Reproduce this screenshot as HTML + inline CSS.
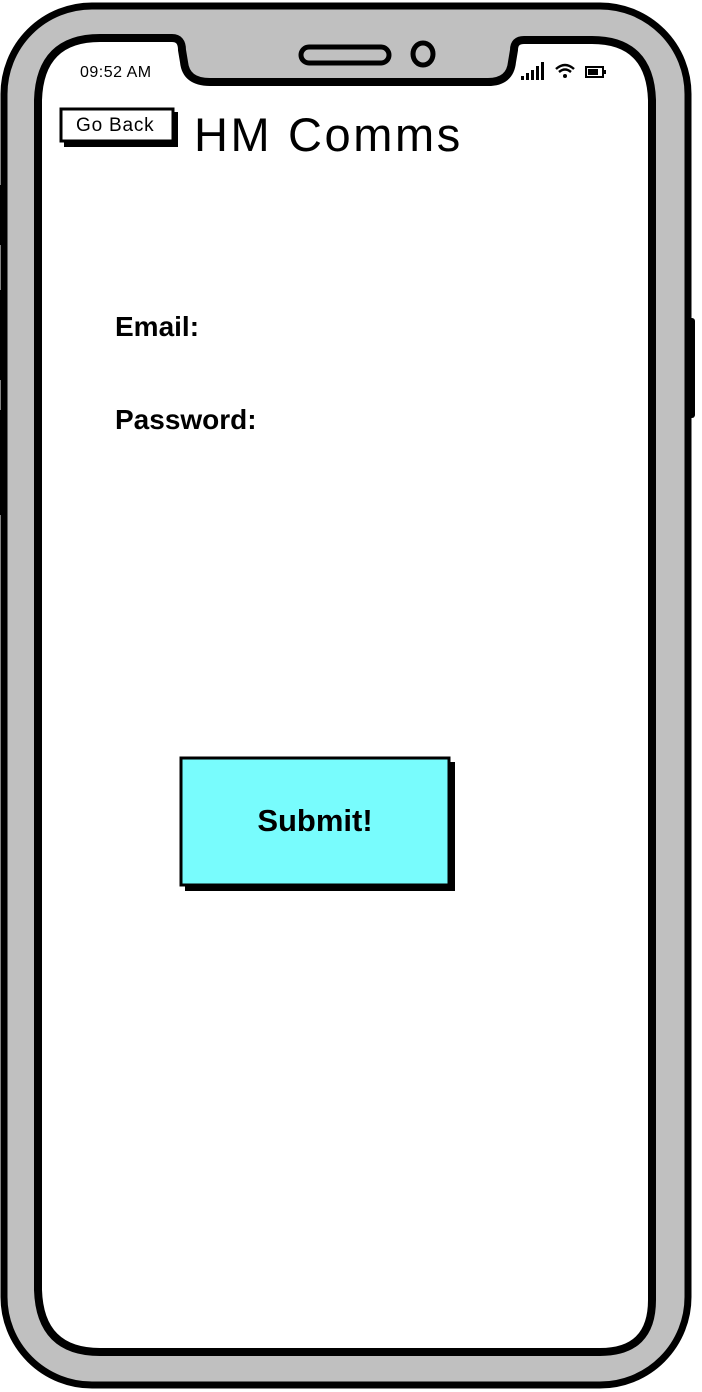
<!DOCTYPE html>
<html><head><meta charset="utf-8"><style>
html,body{margin:0;padding:0;background:#fff;}
body{width:702px;height:1392px;position:relative;overflow:hidden;font-family:"Liberation Sans",sans-serif;}
.t{position:absolute;color:#000;white-space:nowrap;}
</style></head><body>
<svg width="702" height="1392" style="position:absolute;left:0;top:0">
  <rect x="0" y="185" width="8" height="60" fill="#000"/>
  <rect x="0" y="290" width="8" height="90" fill="#000"/>
  <rect x="0" y="410" width="8" height="105" fill="#000"/>
  <rect x="684" y="318" width="11" height="100" rx="3" fill="#000"/>
  <rect x="4" y="6" width="684" height="1379" rx="88" fill="#c0c0c0" stroke="#000" stroke-width="7"/>
  <path d="M100 38 L172 38 Q182 38 182 50 L184 62 Q186 82 210 82 L488 82 Q510 82 512 62 L514 50 Q514 40 524 40 L592 40 Q650 40 652 100 L652 1300 Q652 1352 600 1352 L100 1352 Q40 1352 38 1290 L38 100 Q40 38 100 38 Z" fill="#fff" stroke="#000" stroke-width="8"/>
  <rect x="301" y="47" width="88" height="16" rx="8" fill="#c0c0c0" stroke="#000" stroke-width="5"/>
  <ellipse cx="423" cy="54" rx="10" ry="11" fill="#c0c0c0" stroke="#000" stroke-width="5"/>
  <rect x="521" y="76" width="3" height="4" fill="#000"/>
  <rect x="526" y="73" width="3" height="7" fill="#000"/>
  <rect x="531" y="70" width="3" height="10" fill="#000"/>
  <rect x="536" y="66" width="3" height="14" fill="#000"/>
  <rect x="541" y="62" width="3" height="18" fill="#000"/>
  <path d="M556 69 Q565 61 574 69" stroke="#000" stroke-width="2.5" fill="none"/>
  <path d="M559 72 Q565 67 571 72" stroke="#000" stroke-width="2.5" fill="none"/>
  <circle cx="565" cy="76" r="2" fill="#000"/>
  <rect x="586" y="67" width="17" height="10" fill="none" stroke="#000" stroke-width="2"/>
  <rect x="588" y="69" width="10" height="6" fill="#000"/>
  <rect x="604" y="70" width="2" height="4" fill="#000"/>
  <rect x="64" y="112" width="114" height="35" fill="#000"/>
  <rect x="61" y="109" width="112" height="32" fill="#fff" stroke="#000" stroke-width="3"/>
  <rect x="185" y="762" width="270" height="129" fill="#000"/>
  <rect x="181" y="758" width="268" height="127" fill="#78fcfd" stroke="#000" stroke-width="3"/>
</svg>
<div class="t" style="left:80px;top:64px;font-size:16px;letter-spacing:0.5px;">09:52 AM</div>
<div class="t" style="left:76px;top:115px;font-size:19px;letter-spacing:0.8px;">Go Back</div>
<div class="t" style="left:194px;top:107px;font-size:47px;letter-spacing:2.6px;">HM Comms</div>
<div class="t" style="left:115px;top:311px;font-size:28px;font-weight:bold;">Email:</div>
<div class="t" style="left:115px;top:404px;font-size:28px;font-weight:bold;">Password:</div>
<div class="t" style="left:181px;top:803px;width:268px;text-align:center;font-size:31px;font-weight:bold;">Submit!</div>
</body></html>
